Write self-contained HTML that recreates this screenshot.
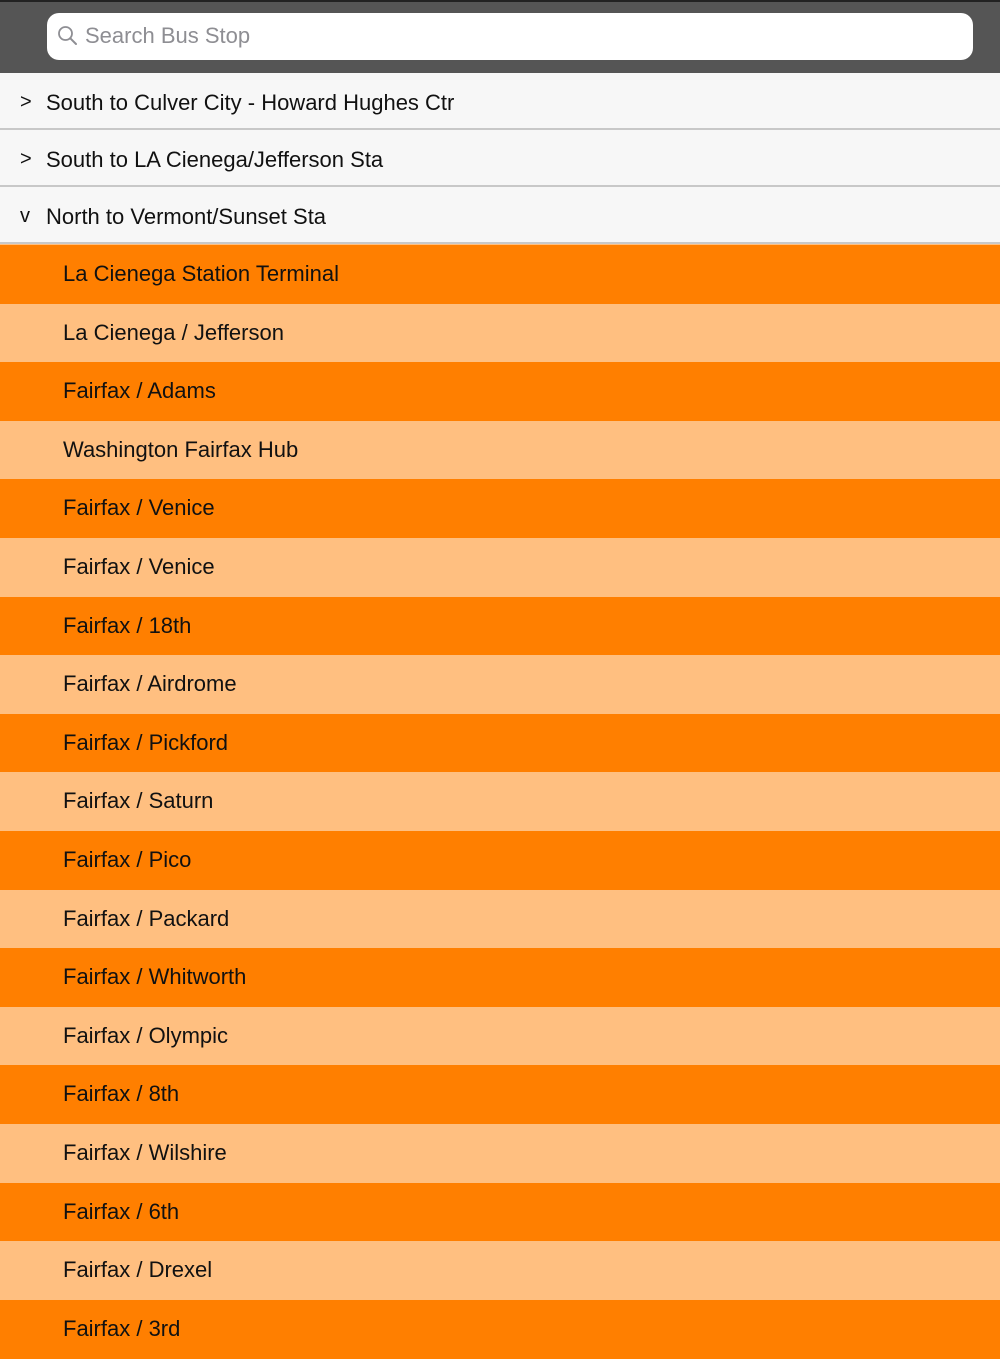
<!DOCTYPE html>
<html><head><style>
*{margin:0;padding:0;box-sizing:border-box}
body{width:1000px;height:1334px;overflow:hidden;background:#ffbf80;font-family:"Liberation Sans",sans-serif;color:#111;position:relative}
.top{position:absolute;left:0;top:0;width:1000px;height:73px;background:#555;border-top:2px solid #222}
.search{position:absolute;left:47px;top:11px;width:926px;height:47px;background:#fff;border-radius:12px}
.search span{position:absolute;left:38px;top:10px;font-size:22px;color:#8e8e93}
.search svg{position:absolute;left:10px;top:12px}
.hdr{position:absolute;left:0;width:1000px;height:57px;background:#f7f7f7;border-bottom:2px solid #c8c8c8;font-size:22px}
.hdr b{position:absolute;left:20px;top:18px;font-weight:normal;font-size:20px}
.hdr span{position:absolute;left:46px;top:17px}
.row{position:absolute;left:0;width:1000px;height:59px;font-size:22px;padding-left:63px;line-height:58px}
.o{background:#ff7f00}.l{background:#ffbf80}
</style></head><body>
<div class="top"><div class="search"><svg width="22" height="22" viewBox="0 0 22 22"><circle cx="8.5" cy="8.5" r="6.5" fill="none" stroke="#8e8e93" stroke-width="1.8"/><line x1="13.3" y1="13.3" x2="19" y2="19" stroke="#8e8e93" stroke-width="2" stroke-linecap="round"/></svg><span>Search Bus Stop</span></div></div>
<div class="hdr" style="top:73px"><b>&gt;</b><span>South to Culver City - Howard Hughes Ctr</span></div>
<div class="hdr" style="top:130px"><b>&gt;</b><span>South to LA Cienega/Jefferson Sta</span></div>
<div class="hdr" style="top:187px"><b>v</b><span>North to Vermont/Sunset Sta</span></div>
<div class="row o" style="top:245px">La Cienega Station Terminal</div>
<div class="row l" style="top:303.6px">La Cienega / Jefferson</div>
<div class="row o" style="top:362.2px">Fairfax / Adams</div>
<div class="row l" style="top:420.8px">Washington Fairfax Hub</div>
<div class="row o" style="top:479.4px">Fairfax / Venice</div>
<div class="row l" style="top:538px">Fairfax / Venice</div>
<div class="row o" style="top:596.6px">Fairfax / 18th</div>
<div class="row l" style="top:655.2px">Fairfax / Airdrome</div>
<div class="row o" style="top:713.8px">Fairfax / Pickford</div>
<div class="row l" style="top:772.4px">Fairfax / Saturn</div>
<div class="row o" style="top:831px">Fairfax / Pico</div>
<div class="row l" style="top:889.6px">Fairfax / Packard</div>
<div class="row o" style="top:948.2px">Fairfax / Whitworth</div>
<div class="row l" style="top:1006.8px">Fairfax / Olympic</div>
<div class="row o" style="top:1065.4px">Fairfax / 8th</div>
<div class="row l" style="top:1124px">Fairfax / Wilshire</div>
<div class="row o" style="top:1182.6px">Fairfax / 6th</div>
<div class="row l" style="top:1241.2px">Fairfax / Drexel</div>
<div class="row o" style="top:1299.8px">Fairfax / 3rd</div>
</body></html>
